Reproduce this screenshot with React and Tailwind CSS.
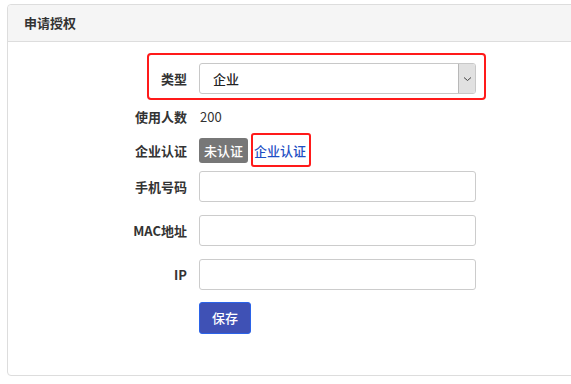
import React from "react";

const font = { fontFamily: '"Noto Sans CJK SC", "Noto Sans", sans-serif' };

function Label({ children }) {
  return (
    <div className="w-[179px] shrink-0 text-right text-[13px] font-bold text-[#333]">
      {children}
    </div>
  );
}

function TextInput() {
  return (
    <div className="ml-[12px] h-[31px] w-[277px] rounded-[3px] border border-[#cccccc] bg-white" />
  );
}

export default function App() {
  return (
    <div className="h-[384px] w-[571px] overflow-hidden bg-white" style={font}>
      <div className="ml-[7px] mt-[4px] h-[372px] w-[600px] rounded-[4px] border border-[#dddddd] bg-white">
        <div className="flex h-[37px] items-center rounded-t-[4px] border-b border-[#dddddd] bg-[#f5f5f5] pl-[16px] text-[13px] font-bold text-[#333]">
          申请授权
        </div>
        <div className="flex flex-col">
          <div className="relative mt-[21px] flex h-[31px] items-center">
            <div className="pointer-events-none absolute left-[139px] top-[-10px] h-[47px] w-[339px] rounded-[4px] border-2 border-[#ff1a1a]" />
            <Label>类型</Label>
            <div className="ml-[12px] flex h-[31px] w-[277px] items-center overflow-hidden rounded-[3px] border border-[#c8c8c8] bg-white">
              <div className="flex-1 pl-[13px] text-[13px] font-medium text-[#222]">企业</div>
              <div className="flex h-full w-[17px] items-center justify-center border-l border-[#b8b8b8] bg-[#e1e1e1]">
                <svg width="9" height="6" viewBox="0 0 9 6">
                  <path d="M1 1.5 L4.5 4.5 L8 1.5" fill="none" stroke="#444" strokeWidth="1" />
                </svg>
              </div>
            </div>
          </div>

          <div className="mt-[13px] flex h-[20px] items-center">
            <Label>使用人数</Label>
            <div className="ml-[13px] text-[13px] text-[#333]">200</div>
          </div>

          <div className="relative mt-[11px] flex h-[25px] items-center">
            <Label>企业认证</Label>
            <div className="ml-[12px] flex h-[25px] items-center rounded-[3px] bg-[#777777] px-[5px] text-[13px] font-medium text-white">
              未认证
            </div>
            <div className="relative ml-[6px] text-[13px] font-medium text-[#1f4fc4]">
              企业认证
              <div className="pointer-events-none absolute left-[-3px] top-[-8px] h-[34px] w-[60px] rounded-[3px] border-2 border-[#ff1a1a]" />
            </div>
          </div>

          <div className="mt-[8px] flex h-[31px] items-center">
            <Label>手机号码</Label>
            <TextInput />
          </div>

          <div className="mt-[13px] flex h-[31px] items-center">
            <Label>MAC地址</Label>
            <TextInput />
          </div>

          <div className="mt-[13px] flex h-[31px] items-center">
            <Label>IP</Label>
            <TextInput />
          </div>

          <div className="mt-[12px] flex h-[32px] items-center">
            <div className="w-[179px] shrink-0" />
            <button className="ml-[12px] flex h-[32px] w-[52px] items-center justify-center rounded-[3px] border border-[#2b63e8] bg-[#3f51b5] text-[13px] font-medium text-white">
              保存
            </button>
          </div>
        </div>
      </div>
    </div>
  );
}
